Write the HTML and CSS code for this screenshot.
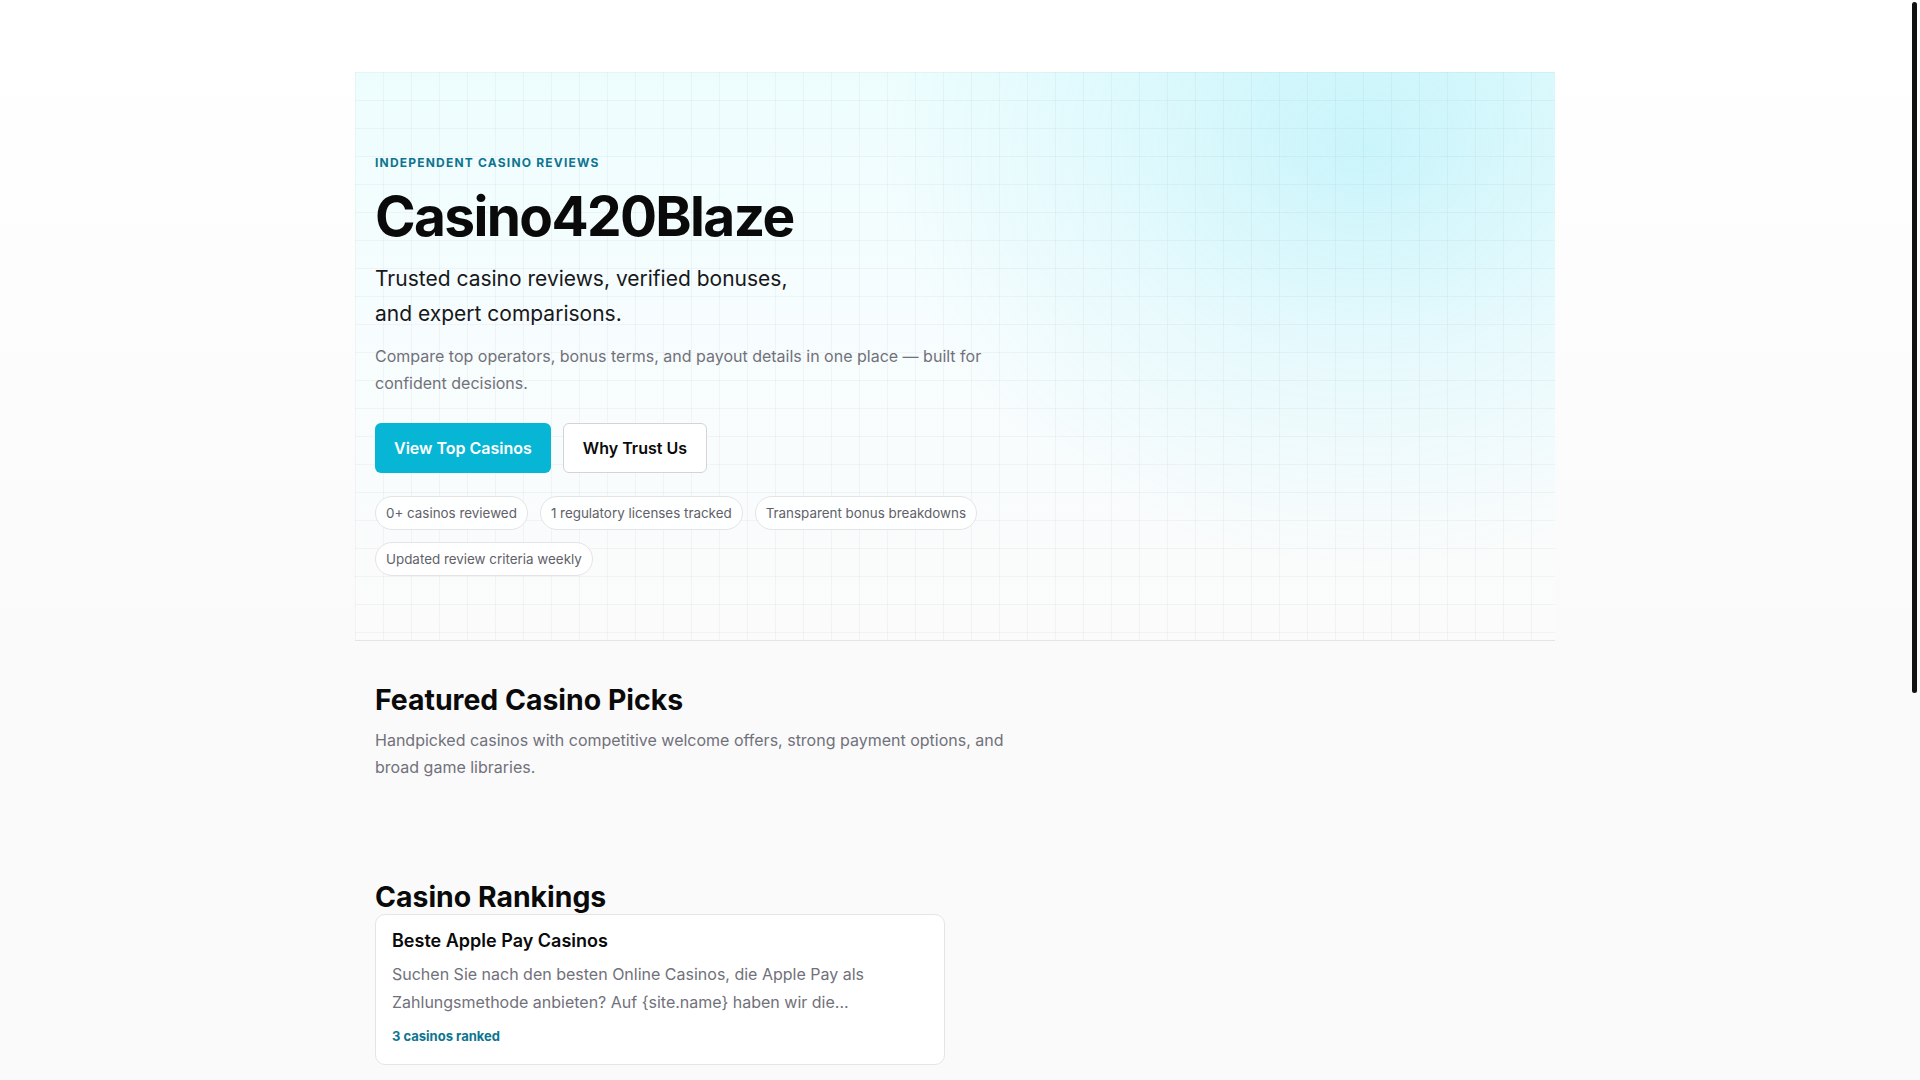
FILE: index.html
```html
<!DOCTYPE html>
<html lang="en">
<head>
<meta charset="utf-8">
<title>Casino420Blaze – Independent Casino Reviews</title>
<link rel="stylesheet" href="styles.css">
</head>
<body>
<main class="page">
  <section class="hero">
    <p class="eyebrow">INDEPENDENT CASINO REVIEWS</p>
    <h1 class="hero-title">Casino420Blaze</h1>
    <p class="hero-sub">Trusted casino reviews, verified bonuses,<br>and expert comparisons.</p>
    <p class="hero-desc">Compare top operators, bonus terms, and payout details in one place — built for confident decisions.</p>
    <div class="hero-actions">
      <a class="btn btn-primary" href="#rankings">View Top Casinos</a>
      <a class="btn btn-secondary" href="#trust">Why Trust Us</a>
    </div>
    <ul class="chips">
      <li class="chip">0+ casinos reviewed</li>
      <li class="chip">1 regulatory licenses tracked</li>
      <li class="chip">Transparent bonus breakdowns</li>
      <li class="chip">Updated review criteria weekly</li>
    </ul>
  </section>

  <section class="section featured">
    <h2 class="section-title">Featured Casino Picks</h2>
    <p class="section-desc">Handpicked casinos with competitive welcome offers, strong payment options, and broad game libraries.</p>
    <div class="card-grid featured-grid"></div>
  </section>

  <section class="section rankings" id="rankings">
    <h2 class="section-title">Casino Rankings</h2>
    <div class="card-grid">
      <article class="card">
        <h3 class="card-title">Beste Apple Pay Casinos</h3>
        <p class="card-desc">Suchen Sie nach den besten Online Casinos, die Apple Pay als Zahlungsmethode anbieten? Auf {site.name} haben wir die...</p>
        <a class="card-link" href="#">3 casinos ranked</a>
      </article>
    </div>
  </section>
</main>
<div class="scrollbar" aria-hidden="true"><div class="scrollbar-thumb"></div></div>
</body>
</html>
```

FILE: styles.css
```css
html {
  background: linear-gradient(180deg, #ffffff 0px, #fafafa 640px) #fafafa;
}

body {
  margin: 0;
  padding-right: 10px;
  min-height: 1678px;
  font-family: Inter, "Noto Sans", "Liberation Sans", sans-serif;
  color: #0a0a0a;
  background: transparent;
}

.scrollbar {
  position: fixed;
  top: 0;
  right: 0;
  width: 10px;
  height: 100vh;
}

.scrollbar-thumb {
  margin: 2px 3px 0 2px;
  height: 691px;
  border-radius: 3px;
  background: #111111;
}

.page {
  max-width: 1200px;
  margin: 0 auto;
  padding-top: 72px;
}

.hero {
  padding: 83px 20px 64px;
  border-bottom: 1px solid #e4e4e7;
  background:
    linear-gradient(to right, rgba(24, 24, 27, 0.035) 1px, transparent 1px) 0 0 / 28px 28px,
    linear-gradient(to bottom, rgba(24, 24, 27, 0.035) 1px, transparent 1px) 0 0 / 28px 28px,
    radial-gradient(ellipse 480px 420px at 1010px 75px, rgba(34, 211, 238, 0.19), rgba(34, 211, 238, 0.07) 55%, rgba(34, 211, 238, 0) 100%),
    linear-gradient(180deg, #edfdfe 0%, #f7fdfe 45%, #fbfbfb 100%);
}

.eyebrow {
  margin: 0 0 14px;
  font-size: 12px;
  line-height: 16px;
  font-weight: 700;
  letter-spacing: 0.1em;
  color: #0e7490;
}

.hero-title {
  margin: 0 0 14px;
  font-size: 55px;
  line-height: 62px;
  font-weight: 700;
  letter-spacing: -0.03em;
  color: #0a0a0a;
}

.hero-sub {
  margin: 0 0 12px;
  font-size: 21px;
  line-height: 35px;
  font-weight: 400;
  color: #18181b;
}

.hero-desc {
  margin: 0 0 26px;
  max-width: 640px;
  font-size: 16px;
  line-height: 1.7;
  color: #71717a;
}

.hero-actions {
  display: flex;
  gap: 12px;
  margin-bottom: 23px;
}

.btn {
  display: inline-flex;
  align-items: center;
  box-sizing: border-box;
  height: 50px;
  padding: 0 19px;
  border-radius: 6px;
  font-size: 16px;
  font-weight: 600;
  text-decoration: none;
}

.btn-primary {
  background: #06b6d4;
  color: #ffffff;
}

.btn-secondary {
  background: #ffffff;
  color: #0a0a0a;
  border: 1px solid #d4d4d8;
}

.chips {
  display: flex;
  flex-wrap: wrap;
  gap: 12px;
  max-width: 640px;
  margin: 0;
  padding: 0;
  list-style: none;
}

.chip {
  padding: 6px 10px;
  border: 1px solid #e4e4e7;
  border-radius: 999px;
  background: rgba(255, 255, 255, 0.85);
  font-size: 13.4px;
  line-height: 20px;
  color: #616169;
}

.section {
  padding: 0 20px;
}

.featured {
  padding-top: 42px;
  padding-bottom: 99px;
}

.section-title {
  margin: 0;
  font-size: 28.4px;
  line-height: 33.6px;
  font-weight: 700;
  letter-spacing: 0;
  color: #0a0a0a;
}

.section-desc {
  margin: 10px 0 0;
  max-width: 640px;
  font-size: 16px;
  line-height: 1.7;
  color: #71717a;
}

.card-grid {
  display: grid;
  grid-template-columns: repeat(2, 1fr);
  gap: 20px;
}

.card {
  padding: 15px 16px 18px;
  border: 1px solid #e4e4e7;
  border-radius: 10px;
  background: #ffffff;
}

.card-title {
  margin: 0 0 8px;
  font-size: 18px;
  line-height: 1.2;
  font-weight: 600;
  letter-spacing: 0;
  color: #0a0a0a;
}

.card-desc {
  margin: 0 0 11px;
  font-size: 16px;
  line-height: 28px;
  color: #71717a;
}

.card-link {
  display: block;
  font-size: 13px;
  line-height: 19.5px;
  font-weight: 700;
  color: #0e7490;
  text-decoration: none;
}

.rankings {
  padding-bottom: 64px;
}
```
